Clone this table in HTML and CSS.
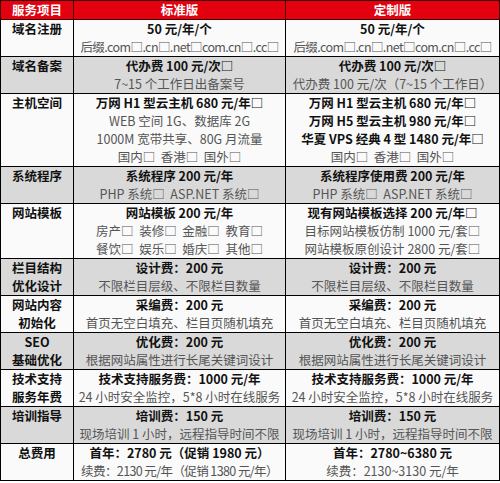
FILE: index.html
```html
<!DOCTYPE html>
<html lang="zh-CN">
<head>
<meta charset="utf-8">
<title>网站建设报价</title>
<link rel="stylesheet" href="styles.css">
</head>
<body>
<table class="price">
  <colgroup><col class="c1"><col class="c2"><col class="c3"></colgroup>
  <thead>
    <tr><th>服务项目</th><th>标准版</th><th>定制版</th></tr>
  </thead>
  <tbody>
    <tr class="light">
      <td class="label"><div>域名注册</div></td>
      <td><div class="b">50 元/年/个</div><div class="g tight">后缀.com□.cn□.net□com.cn□.cc□</div></td>
      <td><div class="b">50 元/年/个</div><div class="g tight">后缀.com□.cn□.net□com.cn□.cc□</div></td>
    </tr>
    <tr class="dark">
      <td class="label"><div>域名备案</div></td>
      <td><div class="b">代办费 100 元/次□</div><div class="g">7~15 个工作日出备案号</div></td>
      <td><div class="b">代办费 100 元/次□</div><div class="g">代办费 100 元/次（7~15 个工作日）</div></td>
    </tr>
    <tr class="light">
      <td class="label"><div>主机空间</div></td>
      <td><div class="b">万网 H1 型云主机 680 元/年□</div><div class="g">WEB 空间 1G、数据库 2G</div><div class="g">1000M 宽带共享、80G 月流量</div><div class="g">国内□&nbsp; 香港□&nbsp; 国外□</div></td>
      <td><div class="b">万网 H1 型云主机 680 元/年□</div><div class="b">万网 H5 型云主机 980 元/年□</div><div class="b">华夏 VPS 经典 4 型 1480 元/年□</div><div class="g">国内□&nbsp; 香港□&nbsp; 国外□</div></td>
    </tr>
    <tr class="dark">
      <td class="label"><div>系统程序</div></td>
      <td><div class="b">系统程序 200 元/年</div><div class="g">PHP 系统□&nbsp; ASP.NET 系统□</div></td>
      <td><div class="b">系统程序使用费 200 元/年</div><div class="g">PHP 系统□&nbsp; ASP.NET 系统□</div></td>
    </tr>
    <tr class="light">
      <td class="label"><div>网站模板</div></td>
      <td><div class="b">网站模板 200 元/年</div><div class="g">房产□&nbsp; 装修□&nbsp; 金融□&nbsp; 教育□</div><div class="g">餐饮□&nbsp; 娱乐□&nbsp; 婚庆□&nbsp; 其他□</div></td>
      <td><div class="b">现有网站模板选择 200 元/年□</div><div class="g">目标网站模板仿制 1000 元/套□</div><div class="g">网站模板原创设计 2800 元/套□</div></td>
    </tr>
    <tr class="dark">
      <td class="label"><div>栏目结构</div><div>优化设计</div></td>
      <td><div class="b">设计费：200 元</div><div class="g">不限栏目层级、不限栏目数量</div></td>
      <td><div class="b">设计费：200 元</div><div class="g">不限栏目层级、不限栏目数量</div></td>
    </tr>
    <tr class="light">
      <td class="label"><div>网站内容</div><div>初始化</div></td>
      <td><div class="b">采编费：200 元</div><div class="g">首页无空白填充、栏目页随机填充</div></td>
      <td><div class="b">采编费：200 元</div><div class="g">首页无空白填充、栏目页随机填充</div></td>
    </tr>
    <tr class="dark">
      <td class="label"><div>SEO</div><div>基础优化</div></td>
      <td><div class="b">优化费：200 元</div><div class="g">根据网站属性进行长尾关键词设计</div></td>
      <td><div class="b">优化费：200 元</div><div class="g">根据网站属性进行长尾关键词设计</div></td>
    </tr>
    <tr class="light">
      <td class="label"><div>技术支持</div><div>服务年费</div></td>
      <td><div class="b">技术支持服务费：1000 元/年</div><div class="g">24 小时安全监控，5*8 小时在线服务</div></td>
      <td><div class="b">技术支持服务费：1000 元/年</div><div class="g">24 小时安全监控，5*8 小时在线服务</div></td>
    </tr>
    <tr class="dark">
      <td class="label"><div>培训指导</div></td>
      <td><div class="b">培训费：150 元</div><div class="g">现场培训 1 小时，远程指导时间不限</div></td>
      <td><div class="b">培训费：150 元</div><div class="g">现场培训 1 小时，远程指导时间不限</div></td>
    </tr>
    <tr class="light">
      <td class="label"><div>总费用</div></td>
      <td><div class="b">首年：2780 元（促销 1980 元）</div><div class="g tight">续费：2130 元/年（促销 1380 元/年）</div></td>
      <td><div class="b">首年：2780~6380 元</div><div class="g">续费：2130~3130 元/年</div></td>
    </tr>
  </tbody>
</table>
</body>
</html>
```

FILE: styles.css
```css
html, body {
  margin: 0;
  padding: 0;
  background: #ffffff;
}

.price {
  width: 500px;
  table-layout: fixed;
  border-collapse: collapse;
  font-family: "Noto Sans CJK SC", sans-serif;
  font-size: 12.5px;
  line-height: 18px;
  color: #111;
}

.price .c1 { width: 73px; }
.price .c2 { width: 212px; }

.price th {
  background: #e3000f;
  color: #fff;
  font-weight: 700;
  height: 18px;
  padding: 0;
  border: 1px solid #3a0000;
  text-align: center;
  vertical-align: middle;
  line-height: 18px;
}

.price td {
  border: 1px solid #000;
  padding: 0;
  text-align: center;
  vertical-align: top;
  white-space: nowrap;
  overflow: hidden;
}

.price td div {
  height: 18px;
  overflow: hidden;
}

.price tr.light td { background: #fafafa; }
.price tr.dark td { background: #d9d9d9; }

.label {
  font-weight: 700;
  color: #111;
}

.b {
  font-weight: 700;
  color: #111;
}

.g {
  font-weight: 400;
  color: #555;
}

.tight {
  letter-spacing: -0.6px;
}
```
